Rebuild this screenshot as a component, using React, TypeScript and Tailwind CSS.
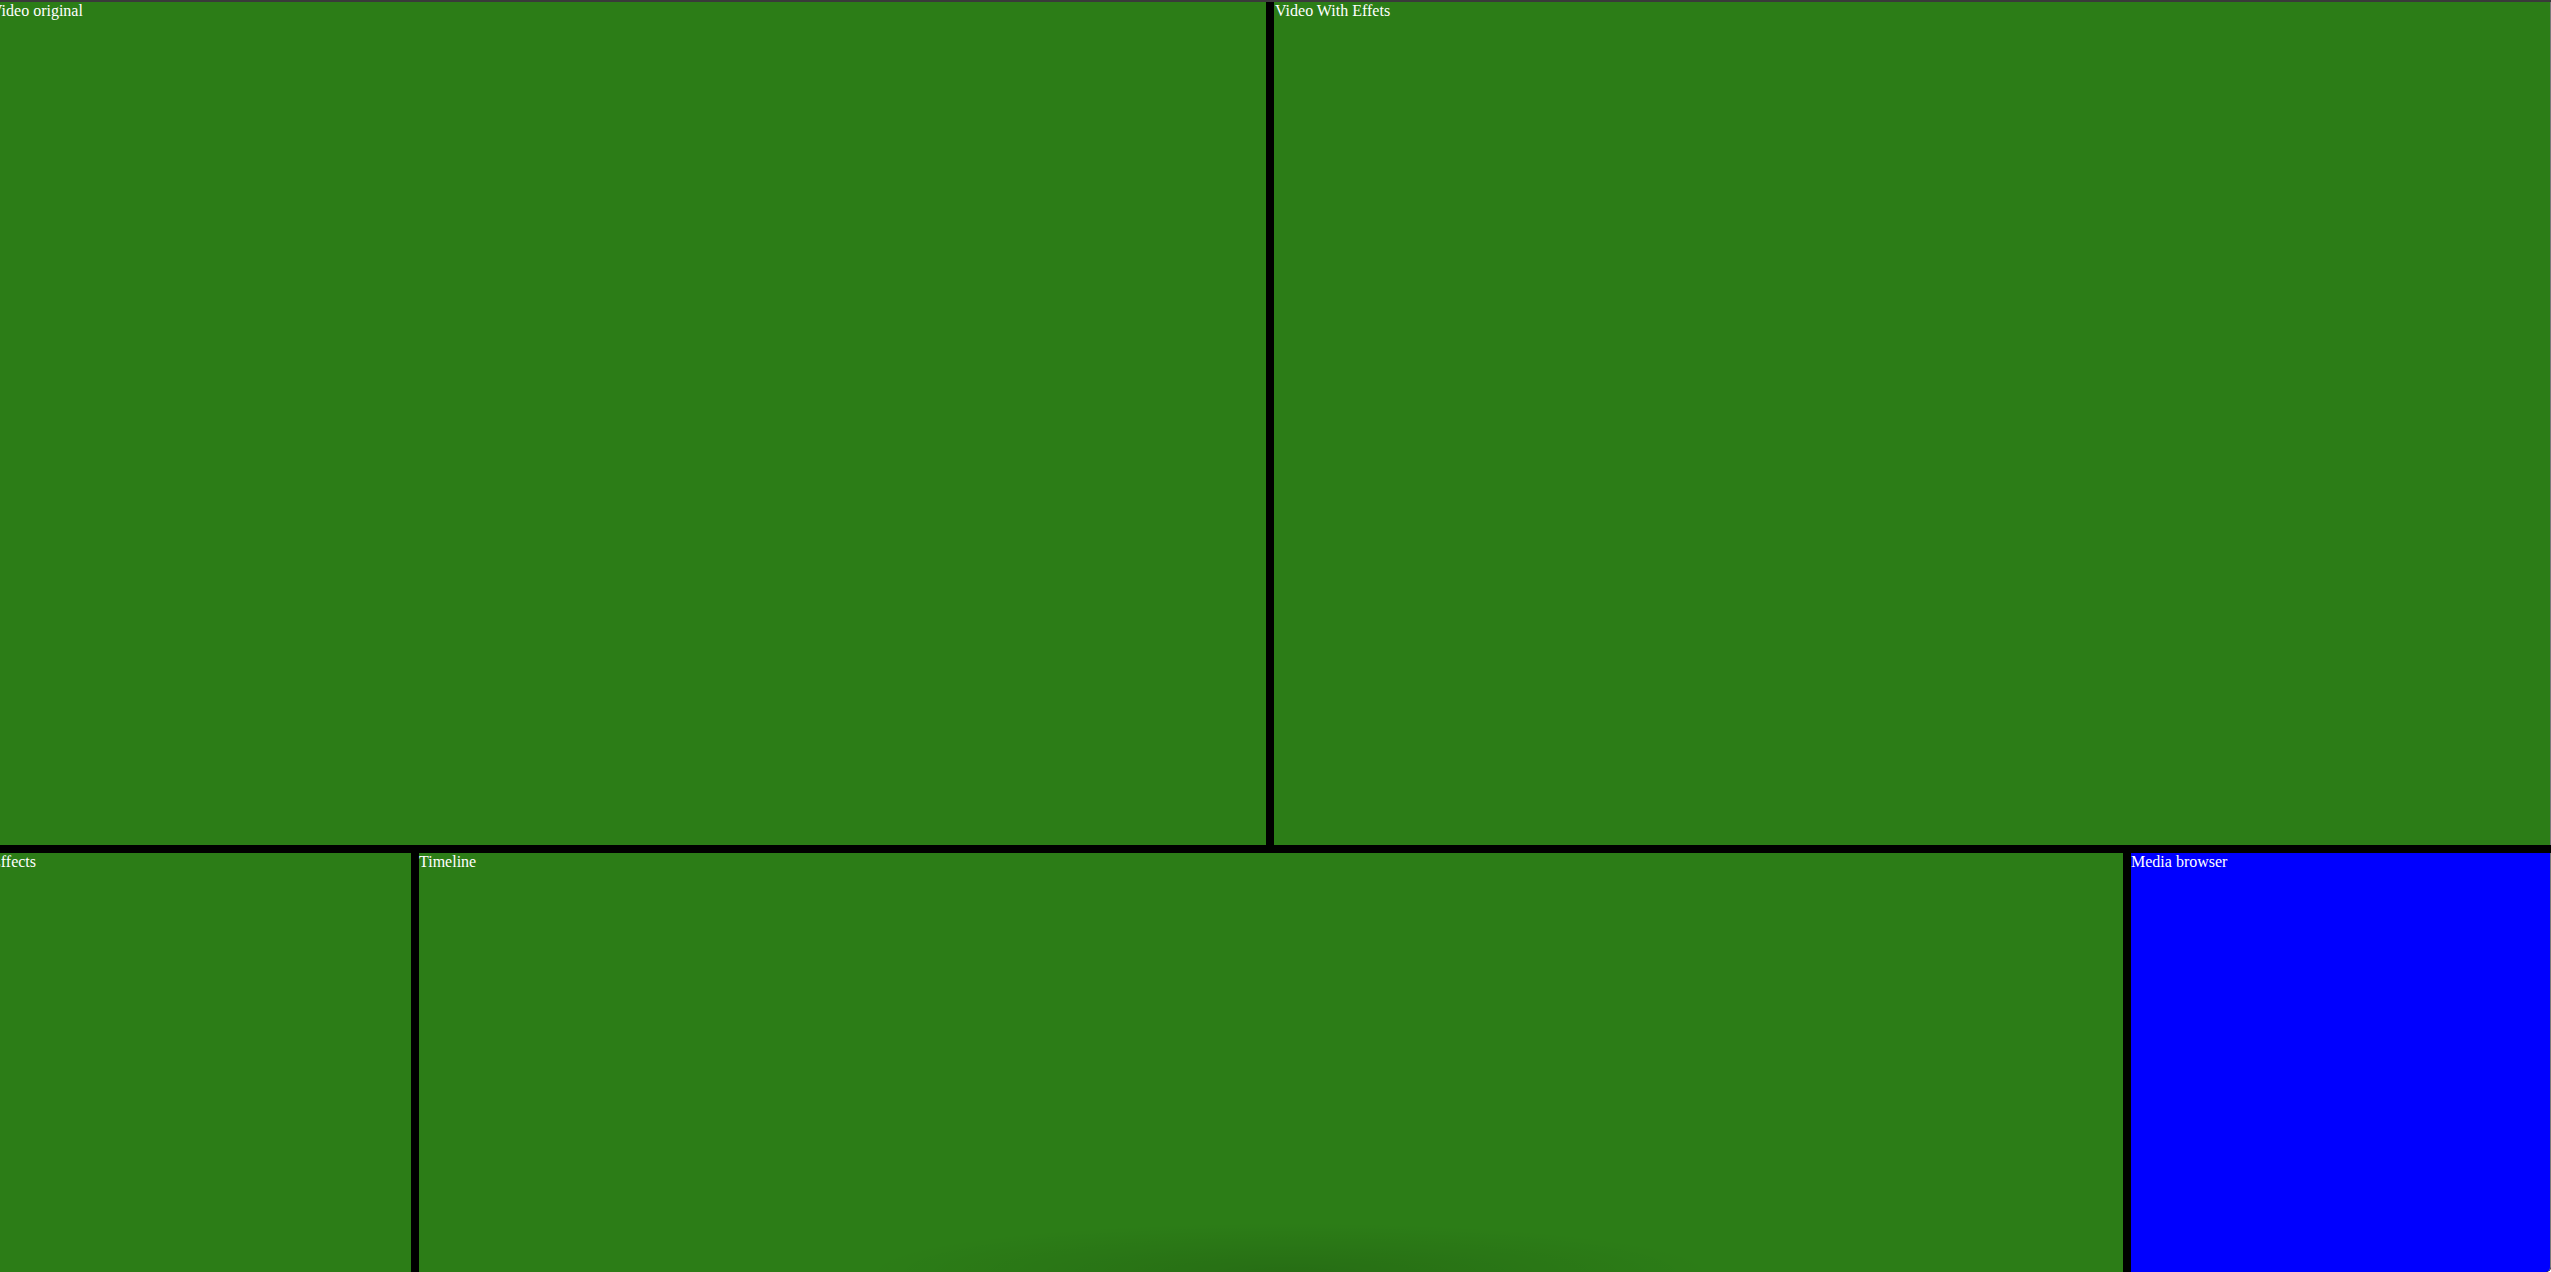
export default function App() {
  const label = "font-['Liberation_Serif',serif] text-[16px] leading-[normal] text-white whitespace-nowrap";

  return (
    <div className="relative h-[1272px] w-full overflow-hidden rounded-br-[5px] bg-[#3a3a3a]">
      <div className="flex h-full flex-col border-t-2 border-[#3a3a3a]">
        <div className="-ml-[9px] flex h-full w-[calc(100%+9px)] flex-col gap-[8px] bg-black">
          {/* top row: the two video monitors */}
          <div className="flex h-[843px] gap-[8px]">
            <div className="flex-1 bg-[#2c7d17]">
              <p className={label}>Video original</p>
            </div>
            <div className="flex-1 border-r border-[#7a7a7a] bg-[#2c7d17] pl-[1px]">
              <p className={label}>Video With Effets</p>
            </div>
          </div>

          {/* bottom row: effects, timeline, media browser */}
          <div className="flex flex-1 gap-[8px]">
            <div className="w-[420px] bg-[#2c7d17]">
              <p className={label}>Effects</p>
            </div>
            <div className="flex-1 bg-[#2c7d17]">
              <p className={label}>Timeline</p>
            </div>
            <div className="w-[420px] rounded-br-[5px] border-r border-[#7a7a7a] bg-[#0000ff]">
              <p className={label}>Media browser</p>
            </div>
          </div>
        </div>
      </div>

      {/* soft shadow near the bottom edge */}
      <div className="pointer-events-none absolute bottom-[-50px] left-[860px] h-[100px] w-[860px] bg-[radial-gradient(ellipse_at_center,rgba(0,0,0,0.12),rgba(0,0,0,0)_70%)]" />
    </div>
  );
}
